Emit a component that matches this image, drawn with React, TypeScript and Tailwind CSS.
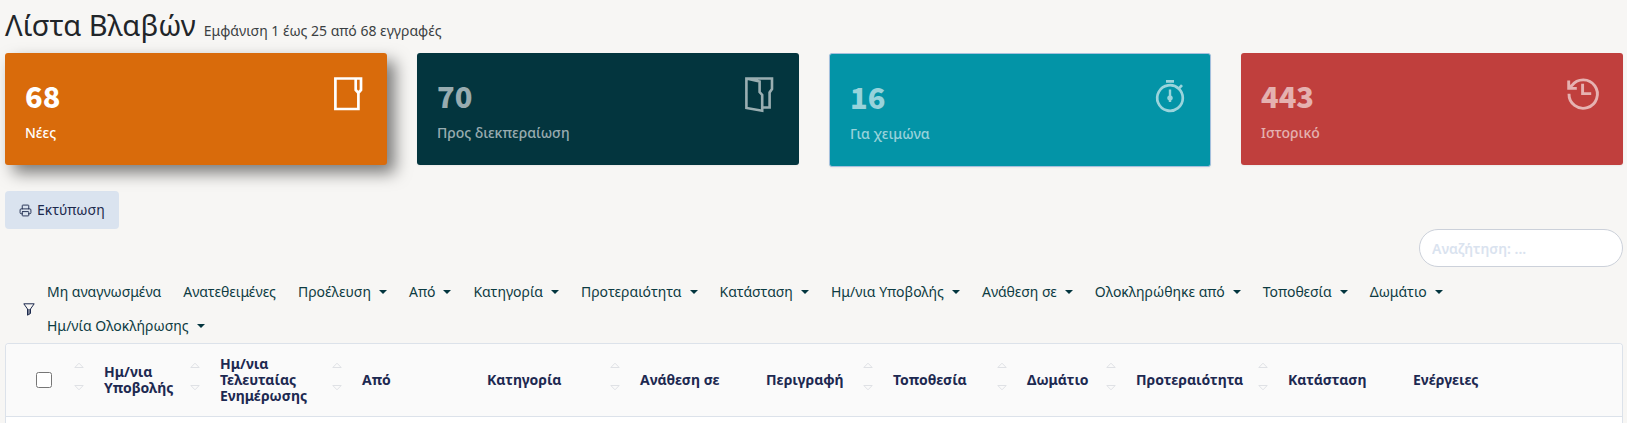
import React from 'react';
import { Printer } from 'lucide-react';

const FolderIcon = () => (
  <svg width="36" height="36" viewBox="0 0 36 36" fill="none" stroke="currentColor" strokeWidth="2.7">
    <path d="M27.4 16V32H4.4V1.5H30V13L27.4 16L24.7 13V1.5" />
  </svg>
);

const OpenFolderIcon = () => (
  <svg width="36" height="36" viewBox="0 0 36 36" fill="none" stroke="currentColor" strokeWidth="2.6">
    <path d="M19 30.5H26.6V15.5L29 12V1.5H3.4V31L19.2 33.7V18L16.6 15V4.5L3.4 1.5" />
  </svg>
);

const StopwatchIcon = () => (
  <svg width="36" height="36" viewBox="0 0 36 36" fill="none" stroke="currentColor" strokeWidth="2.7">
    <path d="M12 3.3H20M28.8 20A12.8 12.8 0 1 1 24.8 10.7L28 7.2M24.8 10.7A12.8 12.8 0 0 1 28.8 20" />
    <path d="M14.8 11.5H17.2V17.4A2.9 2.9 0 0 1 17.2 22.6V24H14.8V22.6A2.9 2.9 0 0 1 14.8 17.4Z" fill="currentColor" stroke="none" />
  </svg>
);

const HistoryIcon = () => (
  <svg width="36" height="36" viewBox="0 0 36 36" fill="none" stroke="currentColor" strokeWidth="2.9">
    <path d="M2 16.7A14.2 14.2 0 1 0 4.8 8.6L2.4 11M1.7 3.6V11.4H9.8M15.6 6.8V16.6H24.2" />
  </svg>
);

const FunnelIcon = () => (
  <svg width="12" height="13" viewBox="0 0 12 13" fill="none" stroke="currentColor">
    <path d="M0.8 0.8H11.2L7.5 6V10.5L4.5 12.2V6Z" />
    <path d="M6 6V11" strokeWidth="2" strokeOpacity="0.6" />
  </svg>
);

const Sorter = () => (
  <svg className="shrink-0" width="10" height="36" viewBox="0 0 10 36" fill="none" stroke="#dfe1e5">
    <path d="M0.8 5.5L5 1.2L9.2 5.5ZM0.8 23.5L5 27.8L9.2 23.5Z" />
  </svg>
);

const cards = [
  { count: 68, label: 'Νέες', icon: <FolderIcon />, box: 'bg-[#d96b0b] shadow-[8px_8px_16px_rgba(0,0,0,0.5)]', text: 'text-white' },
  { count: 70, label: 'Προς διεκπεραίωση', icon: <OpenFolderIcon />, box: 'bg-[#03353e] shadow-xs', text: 'text-white/60' },
  { count: 16, label: 'Για χειμώνα', icon: <StopwatchIcon />, box: 'bg-[#0394a7] border border-[#a5c0dd] shadow-xs', text: 'text-white/60' },
  { count: 443, label: 'Ιστορικό', icon: <HistoryIcon />, box: 'bg-[#c03f3d] shadow-xs', text: 'text-white/60' },
];

const filters = [
  { label: 'Μη αναγνωσμένα' },
  { label: 'Ανατεθειμένες' },
  { label: 'Προέλευση', menu: true },
  { label: 'Από', menu: true },
  { label: 'Κατηγορία', menu: true },
  { label: 'Προτεραιότητα', menu: true },
  { label: 'Κατάσταση', menu: true },
  { label: 'Ημ/νια Υποβολής', menu: true },
  { label: 'Ανάθεση σε', menu: true },
  { label: 'Ολοκληρώθηκε από', menu: true },
  { label: 'Τοποθεσία', menu: true },
  { label: 'Δωμάτιο', menu: true },
  { label: 'Ημ/νία Ολοκλήρωσης', menu: true },
];

const columns = [
  { label: 'Ημ/νια Υποβολής', width: 'w-[116px]', sort: true },
  { label: 'Ημ/νια Τελευταίας Ενημέρωσης', width: 'w-[142px]', sort: true },
  { label: 'Από', width: 'w-[125px]' },
  { label: 'Κατηγορία', width: 'w-[153px]', sort: true },
  { label: 'Ανάθεση σε', width: 'w-[126px]' },
  { label: 'Περιγραφή', width: 'w-[127px]', sort: true },
  { label: 'Τοποθεσία', width: 'w-[134px]', sort: true },
  { label: 'Δωμάτιο', width: 'w-[109px]', sort: true },
  { label: 'Προτεραιότητα', width: 'w-[152px]', sort: true },
  { label: 'Κατάσταση', width: 'w-[125px]' },
  { label: 'Ενέργειες', width: 'w-auto' },
];

const App: React.FC = () => {
  return (
    <div className="min-h-screen bg-[#f7f6f4] pl-[5px] pr-1 font-['Noto_Sans',sans-serif] text-sm">
      <header className="flex items-baseline gap-2 pt-1 pb-2">
        <h1 className="text-[29px] leading-[41px] text-[#212529]">Λίστα Βλαβών</h1>
        <span className="text-[#3b3f42]">Εμφάνιση 1 έως 25 από 68 εγγραφές</span>
      </header>

      <div className="grid grid-cols-4 items-start gap-[30px]">
        {cards.map((card) => (
          <div key={card.label} className={`flex justify-between rounded-[3px] px-5 pt-6 pb-5 ${card.box} ${card.text}`}>
            <div>
              <div className="font-['Noto_Sans_CJK_SC',sans-serif] text-[29px] leading-9 font-black">{card.count}</div>
              <div className="mt-2 leading-6 font-medium">{card.label}</div>
            </div>
            {card.icon}
          </div>
        ))}
      </div>

      <button type="button" className="mt-6 flex h-[38px] items-center gap-[5px] rounded-sm bg-[#dae3ef] px-[14px] text-[#1d2a4d]">
        <Printer size={13} strokeWidth={1.7} />
        Εκτύπωση
      </button>

      <div className="flex justify-end">
        <input
          type="search"
          aria-label="Αναζήτηση"
          placeholder="Αναζήτηση: ..."
          className="h-[38px] w-51 rounded-full border border-[#ccd1da] bg-white px-3 font-semibold placeholder:text-[#dae3ef]"
        />
      </div>

      <div className="flex items-center gap-3 pt-2 pr-4 pl-[18px] text-[#0d3b42]">
        <span className="text-[#1d2a4d]"><FunnelIcon /></span>
        <div className="flex flex-wrap gap-x-[22px]">
          {filters.map((filter) => (
            <button key={filter.label} type="button" className="flex h-[34px] items-center gap-2">
              {filter.label}
              {filter.menu && <span className="border-x-4 border-t-4 border-x-transparent border-t-[#03353e]" />}
            </button>
          ))}
        </div>
      </div>

      <div className="overflow-hidden rounded-t border border-b-0 border-[#dce2ea] bg-white pb-5">
        <table className="w-full table-fixed border-collapse text-left text-[#1d2951]">
          <thead>
            <tr className="h-[72px] border-b border-[#dce2ea] bg-[#fafafa]">
              <th className="w-[86px] pr-2 pl-[30px]">
                <div className="flex items-center justify-between">
                  <input type="checkbox" aria-label="Επιλογή όλων" className="size-4" />
                  <Sorter />
                </div>
              </th>
              {columns.map((col) => (
                <th key={col.label} className={`pr-2 pl-3 leading-4 font-bold ${col.width}`}>
                  <div className="flex items-center justify-between">
                    {col.label}
                    {col.sort && <Sorter />}
                  </div>
                </th>
              ))}
            </tr>
          </thead>
        </table>
      </div>
    </div>
  );
};

export default App;
